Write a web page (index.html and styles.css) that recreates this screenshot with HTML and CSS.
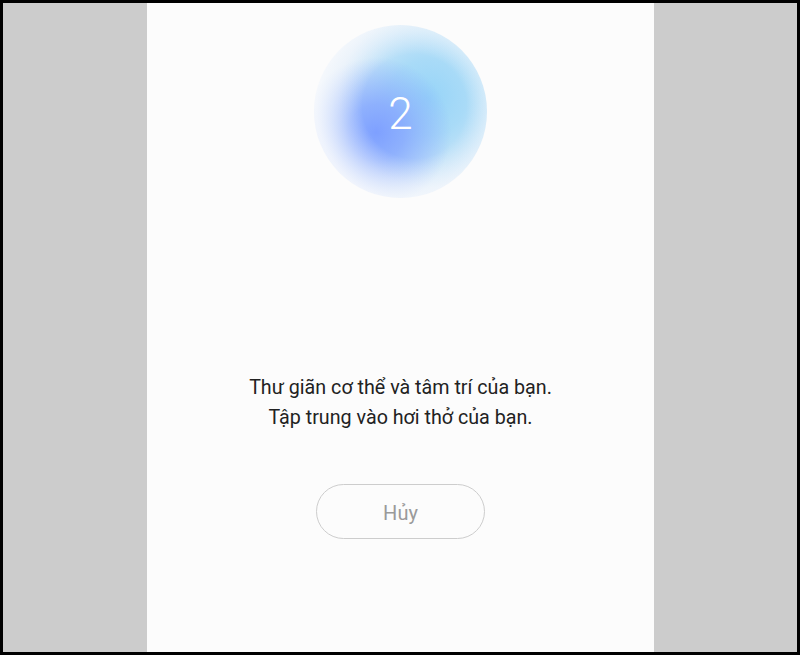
FILE: index.html
```html
<!DOCTYPE html>
<html lang="vi">
<head>
<meta charset="utf-8">
<link rel="stylesheet" href="styles.css">
</head>
<body>
<div class="frame">
  <div class="panel">
    <div class="orb"><span class="count">2</span></div>
    <p class="message">Thư giãn cơ thể và tâm trí của bạn.<br>Tập trung vào hơi thở của bạn.</p>
    <button class="cancel">Hủy</button>
  </div>
</div>
</body>
</html>
```

FILE: styles.css
```css
html, body {
  margin: 0;
  padding: 0;
}
body {
  width: 800px;
  height: 655px;
  overflow: hidden;
  font-family: Roboto, "Noto Sans", sans-serif;
}
.frame {
  box-sizing: border-box;
  width: 800px;
  height: 655px;
  border: 3px solid #000;
  background: #cccccc;
  display: flex;
}
.panel {
  margin-left: 144px;
  width: 507px;
  height: 100%;
  background: #fcfcfc;
  display: flex;
  flex-direction: column;
  align-items: center;
  padding-top: 22px;
  box-sizing: border-box;
}
.orb {
  width: 173px;
  height: 173px;
  border-radius: 50%;
  display: flex;
  align-items: center;
  justify-content: center;
  background:
    radial-gradient(circle 110px at 58% 47%, rgba(252,252,253,0) 52px, rgba(252,252,253,0.4) 74px, rgba(252,252,253,0.8) 98px, rgba(252,252,253,0.85) 110px),
    radial-gradient(circle 75px at 36% 62%, rgba(126,160,255,1) 0, rgba(134,168,254,0.85) 28px, rgba(145,182,252,0) 75px),
    radial-gradient(circle 90px at 66% 42%, rgba(150,212,248,1) 0, rgba(160,216,247,0.85) 38px, rgba(185,226,247,0) 90px),
    #dbeaf9;
}
.count {
  color: #fff;
  font-size: 44px;
  font-weight: 300;
  line-height: 1;
  margin-top: 4px;
}
.message {
  margin: 175px 0 0;
  font-size: 19.7px;
  line-height: 30px;
  color: #222;
  text-align: center;
}
.cancel {
  margin-top: 51px;
  width: 169px;
  height: 55px;
  border: 1.5px solid #cdcdcd;
  border-radius: 28px;
  background: transparent;
  color: #9a9a9a;
  font-family: Roboto, "Noto Sans", sans-serif;
  font-size: 20px;
  padding: 3px 0 0;
}
```
